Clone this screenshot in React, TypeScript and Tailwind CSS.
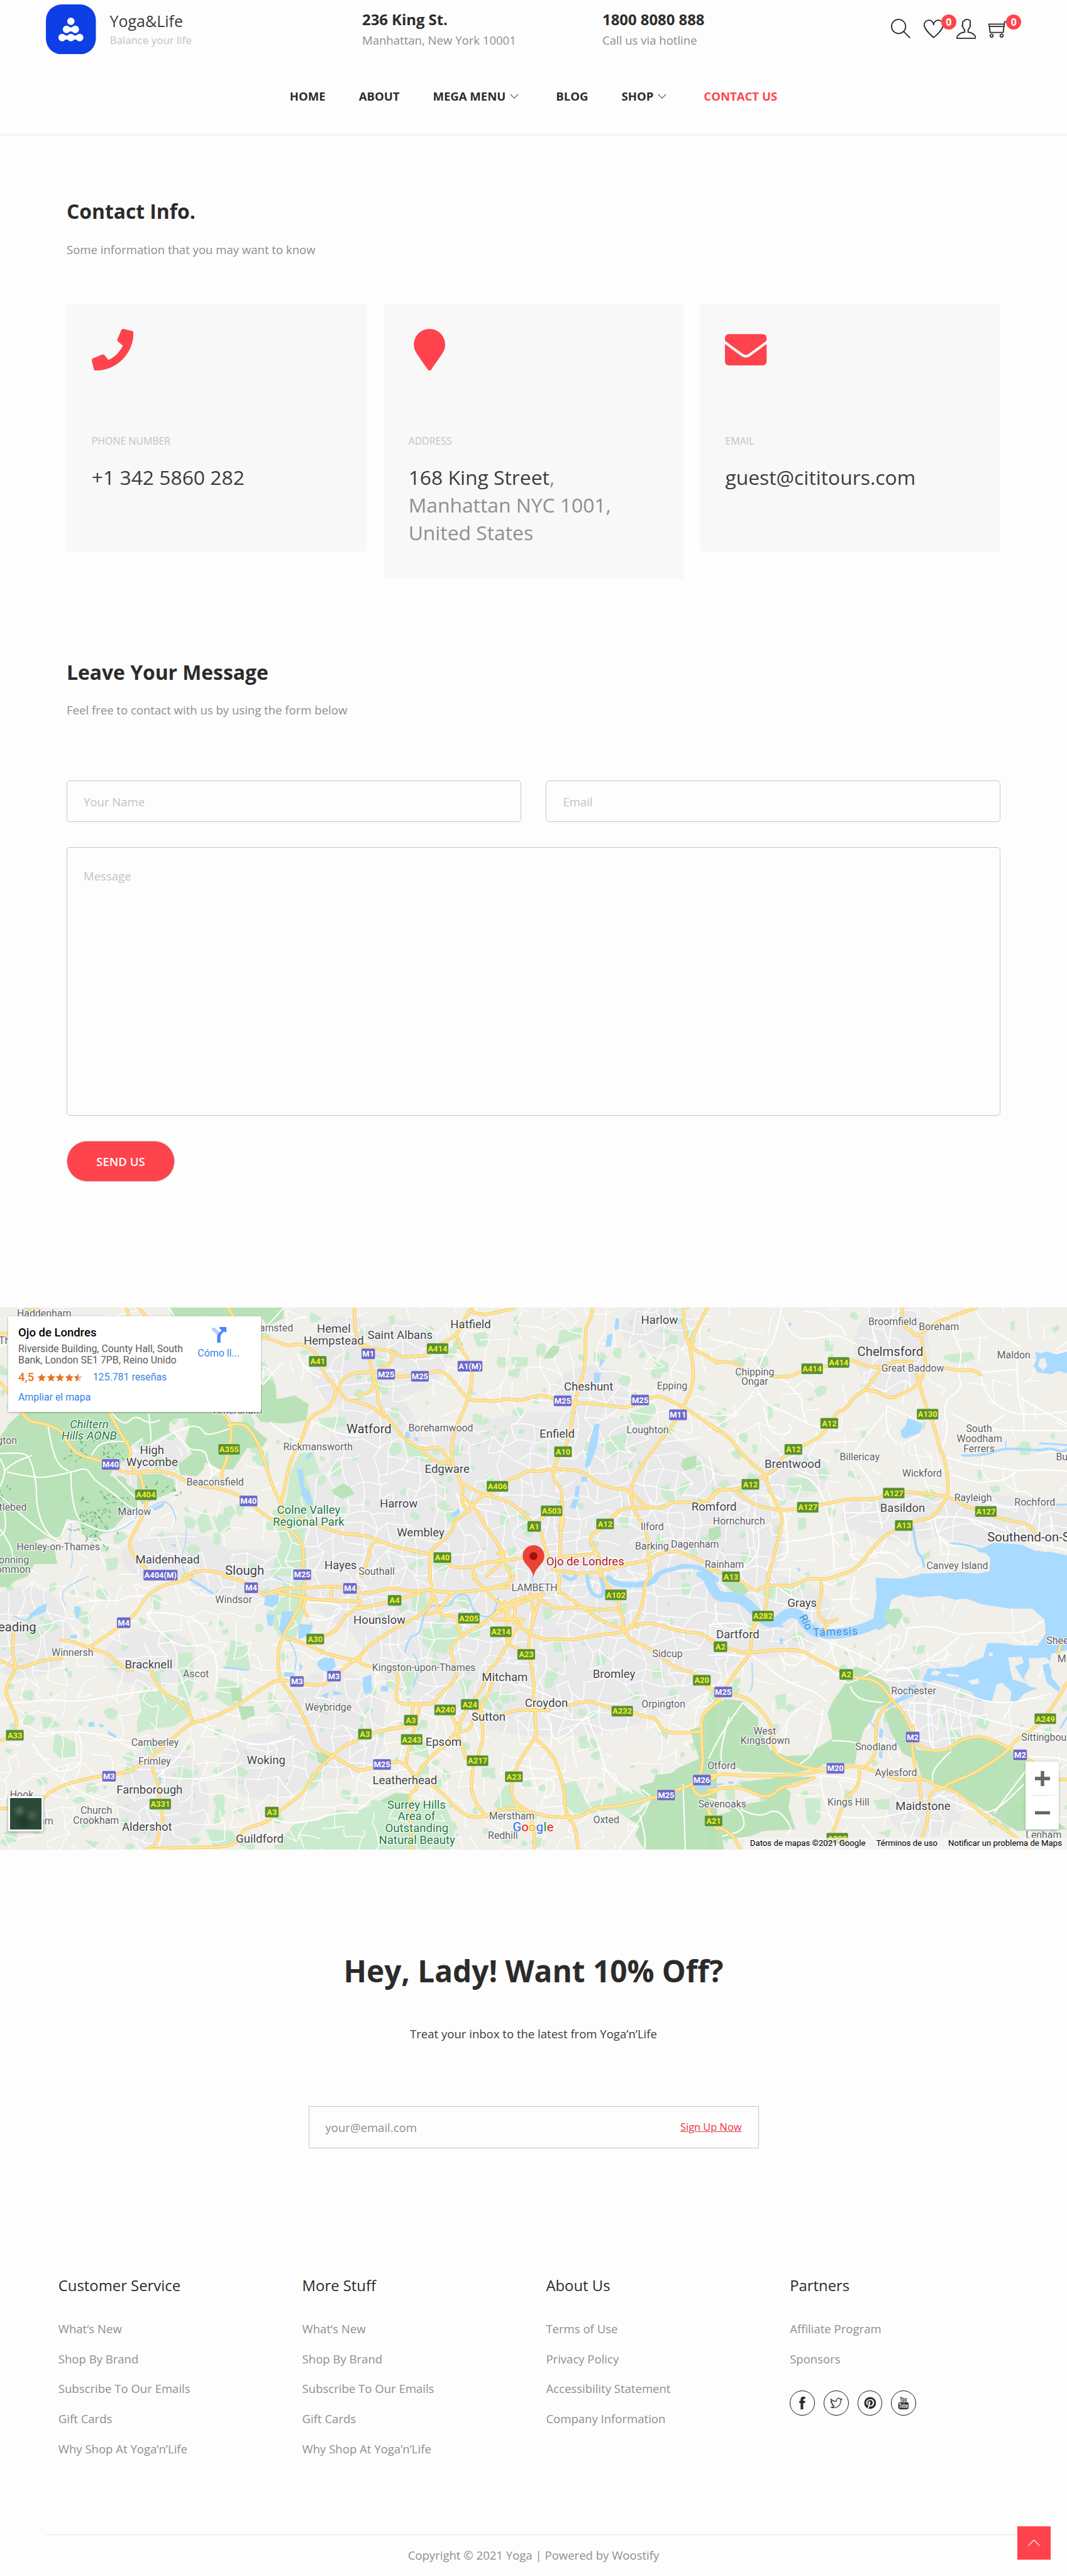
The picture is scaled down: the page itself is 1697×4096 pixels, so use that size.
import React from "react";
import {
  TfiSearch,
  TfiHeart,
  TfiUser,
  TfiShoppingCart,
  TfiAngleDown,
  TfiAngleUp,
  TfiFacebook,
  TfiTwitter,
  TfiPinterestAlt,
  TfiYoutube,
} from "react-icons/tfi";
import { FaPhone, FaMapMarker, FaEnvelope } from "react-icons/fa";

/* ------------------------------------------------------------------ */
/* Map data: six tiles, each in its own grid                           */
/* ------------------------------------------------------------------ */

type Label = [number, number, string, string];
type Shield = [number, number, string];
type Tile = {
  ox: number;
  oy: number;
  sy: number;
  forest: string[];
  park: string[];
  water: string[];
  river: [string, number][];
  white: string[];
  road: string[];
  labels: Label[];
  shields: Shield[];
};

const SX = 0.54847;
const TOP = 0.42091;
const LOW = 0.43367;

const tiles: Tile[] = [
  {
    ox: 0,
    oy: -16,
    sy: TOP,
    forest: [
      "0,780 40,700 90,640 200,600 985,600 1000,690 1080,690 1170,790 1150,830 1080,840 1050,900 1020,960 960,960 900,920 890,960 860,1000 790,990 780,930 840,870 810,800 830,720 820,670 760,670 740,700 740,750 700,780 640,820 620,780 570,830 560,900 500,950 480,1000 540,1000 560,1050 600,1080 620,1160 680,1130 770,1080 760,1020 700,985 600,990 600,1180 540,1230 500,1290 440,1330 430,1355 390,1350 360,1330 350,1270 290,1240 270,1350 240,1370 210,1350 150,1370 240,1420 250,1500 150,1500 120,1570 0,1568",
      "740,30 1240,30 1240,100 1170,145 1140,90 750,90",
      "1090,600 1140,480 1180,450 1205,480 1210,560 1290,540 1350,590 1340,680 1260,700 1140,690",
      "1450,1080 1500,1040 1530,1060 1550,1100 1500,1130 1460,1100",
    ],
    park: [
      "1310,870 1370,860 1400,980 1340,1000 1380,1180 1330,1330 1350,1568 1180,1568 1230,1380 1190,1200 1250,1150 1270,980",
      "860,1250 900,1180 930,1300 880,1330",
      "1390,670 1510,660 1520,710 1420,730",
      "460,1470 520,1460 510,1530 470,1540",
      "930,1230 1000,1200 1010,1300 960,1330",
      "1120,840 1170,860 1180,960 1120,930",
      "1060,600 1100,640 1110,760 1060,700",
    ],
    water: [
      "1300,960 1325,960 1330,1060 1350,1080 1370,1160 1350,1170 1320,1110",
      "1340,880 1365,860 1360,890 1340,910",
      "665,1180 700,1160 720,1145 715,1170 680,1195",
      "745,1385 770,1390 765,1405",
    ],
    river: [
      ["440,1325 520,1310 580,1260 600,1220 640,1190 720,1130 760,1190 770,1250", 2],
      ["300,1260 320,1280 300,1360 320,1450 310,1520", 1.5],
      ["815,1280 815,1380 790,1460 810,1568", 1.5],
    ],
    white: [
      "0,870 80,865 130,880 160,1040 160,1180 200,1320 260,1370 290,1260 340,1250 450,1320 520,1300 590,1240",
      "20,970 50,930 100,900 140,880",
      "0,1060 30,975 0,900",
      "30,975 150,1010 230,1000 330,970 380,950 410,1020 500,1100 560,1170 600,1190",
      "310,970 310,1080 330,1210 350,1250",
      "210,710 220,800 250,930 300,970",
      "490,640 540,720 590,650 650,700 700,680",
      "650,640 660,740 660,800",
      "760,750 830,710 880,720 900,770 980,740 1020,720",
      "760,750 800,800 830,850 900,850 910,930 960,970",
      "760,750 680,810 650,830",
      "560,800 480,800 430,820 400,880",
      "0,1110 60,1180 130,1260 210,1340 260,1370",
      "0,1300 50,1390 60,1490",
      "20,1200 30,1300 0,1340",
      "740,40 760,85",
      "1240,40 1180,130 1160,150 1230,170 1270,110 1340,90",
      "500,1000 560,1080 600,1130",
      "910,930 940,970 900,1050",
      "1400,440 1340,400 1300,300",
      "1150,480 1200,400 1240,350",
      "1340,680 1400,700 1480,760 1568,770",
      "1330,800 1250,770 1180,690",
    ],
    road: [
      "0,465 35,515 90,630 130,690 200,700 270,740 290,800 340,880 430,905 520,960 560,985 680,965 760,985 800,1020 870,1058 960,1065 1080,1125 1140,1210 1230,1270 1310,1350 1330,1430 1320,1568",
      "480,640 540,790 570,830 570,950 600,985",
      "610,985 640,1110 640,1180 600,1290 560,1380 580,1450 640,1530",
      "980,650 1020,690 1000,880 970,970 970,1020",
      "1000,710 1060,690 1110,760 1150,880 1180,1020 1225,1150",
      "1568,570 1510,572 1475,490 1510,430 1568,408",
      "1550,30 1550,180 1580,260",
      "995,30 1020,90",
      "1145,210 1200,220 1250,260 1310,240 1370,280 1390,320 1420,430 1475,490 1460,570 1430,620 1350,660 1320,800 1270,900 1240,1100 1225,1160 1240,1270",
      "550,30 565,90",
      "600,30 640,90",
      "1310,1240 1380,1270 1480,1325 1568,1333",
      "800,1568 860,1540 900,1535 980,1555",
      "0,190 40,185",
      "130,60 165,35",
    ],
    labels: [
      [193, 92, "Haddenham", "s"],
      [1153, 175, "Berkhamsted", "s"],
      [1040, 645, "Amersham", "s"],
      [1460, 180, "Hemel", "m"],
      [1460, 248, "Hempstead", "m"],
      [62, 245, "Thame", "s"],
      [-30, 815, "Watlington", "s"],
      [22, 1195, "Nettlebed", "s"],
      [48, 1495, "Sonning", "s"],
      [44, 1550, "Common", "s"],
      [390, 725, "Chiltern", "gi"],
      [390, 790, "Hills AONB", "gi"],
      [665, 873, "High", "m"],
      [665, 940, "Wycombe", "m"],
      [1391, 852, "Rickmansworth", "s"],
      [941, 1052, "Beaconsfield", "s"],
      [588, 1220, "Marlow", "s"],
      [1350, 1215, "Colne Valley", "g"],
      [1350, 1282, "Regional Park", "g"],
      [255, 1422, "Henley-on-Thames", "s"],
      [733, 1498, "Maidenhead", "m"],
      [1070, 1562, "Slough", "l"],
      [1490, 1530, "Hayes", "m"],
    ],
    shields: [
      [1390, 345, "A41"],
      [1002, 846, "A355"],
      [484, 932, "M40"],
      [638, 1105, "A404"],
      [1087, 1140, "M40"],
      [702, 1563, "A404(M)"],
      [1322, 1560, "M25"],
    ],
  },
  {
    ox: 860,
    oy: -16,
    sy: TOP,
    forest: [
      "820,300 850,255 880,260 875,290 850,325 810,330",
      "1420,900 1480,880 1475,950 1430,970 1410,940",
    ],
    park: [
      "500,190 560,170 570,260 520,260",
      "680,90 700,90 700,200 680,190",
      "880,170 980,150 975,210 870,250",
      "670,320 740,320 740,370 690,380 670,350",
      "650,400 710,380 700,440 660,430",
      "1180,640 1300,580 1300,640 1260,700 1180,710",
      "1090,780 1170,750 1170,850 1110,890 1060,820",
      "200,800 260,830 280,880 340,900 320,930 210,880",
      "420,820 460,830 450,890 410,880",
      "500,640 540,650 545,710 500,690",
      "620,1210 650,1200 660,1270 620,1290",
      "1320,1060 1360,1040 1360,1100 1330,1120",
      "1140,1240 1180,1220 1180,1300 1150,1290",
      "650,1410 690,1400 690,1450 660,1460",
      "1160,920 1200,910 1200,950 1165,960",
      "130,90 160,80 160,130 140,140",
      "1010,1360 1050,1350 1050,1400 1010,1410",
      "90,490 130,480 130,530 95,540",
    ],
    water: [
      "1033,700 1055,700 1045,820 1015,930 1000,955 990,940 1010,810",
      "1090,190 1112,190 1105,260 1080,262",
      "1125,100 1140,100 1138,165 1120,165",
      "1055,330 1080,340 1055,380",
      "1030,410 1062,410 1055,465 1030,468",
      "975,1000 1002,1005 998,1030 975,1030",
      "950,1055 970,1055 962,1120 945,1115",
      "940,1130 965,1130 950,1185 925,1180",
      "205,745 225,750 225,780 205,785",
      "245,775 262,780 260,800 248,800",
      "400,1225 440,1180 445,1210 420,1230",
      "1222,915 1235,920 1230,938",
    ],
    river: [["1300,1568 1330,1540 1380,1530 1420,1508 1490,1518 1530,1545 1568,1590", 7]],
    white: [],
    road: [
      "0,410 80,400 180,435 230,425 320,410 350,395 400,430 480,570 550,565 600,575 650,555 700,570 760,550 800,535 860,560 940,580 1100,595 1150,610 1200,600 1290,545 1330,545 1420,605 1490,660 1568,740",
      "30,250 50,340 65,440 85,500 85,600 150,700 200,790 280,850 350,830 380,870 400,930",
      "280,855 330,920 400,925",
      "0,240 40,270 130,280 200,325 240,315 300,315 340,260 430,200 470,90 500,30",
      "490,60 540,85 600,65 670,50 685,30",
      "430,200 440,260 490,350 500,430 480,570 440,680 410,780 405,900 430,990 460,1060 450,1150 480,1200",
      "155,300 140,360 100,380",
      "0,540 50,530 70,460",
      "0,580 60,600 110,660",
      "1025,30 1020,100 990,150 995,380 960,500 945,600 920,800 870,900 850,960 855,1030 895,1070 885,1280 880,1450",
      "890,1290 900,1250 885,1200",
      "1420,30 1425,180 1450,250 1470,430 1450,530 1420,605 1390,680 1330,780 1260,900 1210,1000 1190,1080",
      "1530,30 1480,150 1450,250 1480,290 1520,310 1568,355",
      "480,1200 530,1110 580,1100 620,1040 700,1000 740,965 790,975 850,955 990,970 1040,1040 1120,1070 1190,1075 1240,1160 1310,1190 1370,1145 1440,1150 1530,1145 1568,1090",
      "455,1040 530,1100 620,1125 690,1170 750,1250 800,1310 810,1380 830,1450",
      "460,1120 520,1190 550,1280 610,1380 630,1450 665,1568",
      "480,1200 420,1250 410,1310 370,1370 310,1420 315,1568",
      "0,1335 50,1340 100,1375 200,1415 330,1445 390,1490 410,1520 500,1520 550,1490 630,1480 720,1465",
      "75,1370 50,1400 45,1460 15,1568",
      "500,1520 510,1568",
      "845,1190 790,1250 770,1290",
      "1260,1180 1200,1175 1130,1195 1080,1290 1000,1340 1050,1440 960,1450 880,1460",
      "1190,1080 1195,1180 1240,1260 1265,1330 1275,1568",
      "1050,1440 1060,1568",
      "850,1530 900,1545 1000,1560 1140,1510 1260,1480 1330,1430 1400,1425 1480,1470 1568,1520",
      "620,1480 650,1420 610,1440",
      "560,1568 620,1500",
    ],
    labels: [
      [491, 158, "Hatfield", "m"],
      [182, 218, "Saint Albans", "m"],
      [1317, 130, "Harlow", "m"],
      [1007, 510, "Cheshunt", "m"],
      [1372, 505, "Epping", "s"],
      [46, 755, "Watford", "l"],
      [360, 743, "Borehamwood", "s"],
      [869, 778, "Enfield", "m"],
      [1265, 755, "Loughton", "s"],
      [388, 980, "Edgware", "m"],
      [176, 1178, "Harrow", "m"],
      [272, 1342, "Wembley", "m"],
      [1285, 1307, "Ilford", "s"],
      [1284, 1418, "Barking", "s"],
      [1472, 1405, "Dagenham", "s"],
      [80, 1560, "Southall", "s"],
      [992, 1508, "Ojo de Londres", "r"],
    ],
    shields: [
      [346, 272, "A414"],
      [43, 302, "M1"],
      [121, 418, "M25"],
      [269, 430, "M25"],
      [488, 373, "A1(M)"],
      [893, 570, "M25"],
      [1232, 565, "M25"],
      [1398, 649, "M11"],
      [895, 860, "A10"],
      [608, 1057, "A406"],
      [845, 1197, "A503"],
      [769, 1285, "A1"],
      [1079, 1271, "A12"],
      [367, 1463, "A40"],
    ],
  },
  {
    ox: 1700,
    oy: -16,
    sy: TOP,
    forest: ["0,1300 50,1280 55,1340 20,1370 0,1350"],
    park: [
      "1030,310 1150,290 1165,330 1110,355 1060,350 1030,330",
      "460,510 490,480 520,490 510,530 480,550",
      "350,1010 430,1010 480,1090 400,1080 380,1100 340,1060",
      "660,480 700,470 690,510",
      "430,560 460,545 450,575",
      "260,590 280,600 280,660 262,680",
      "665,745 690,740 692,790 670,780",
      "610,970 640,970 640,1010 610,1000",
      "1230,1060 1270,1050 1275,1085 1240,1095",
      "590,1330 620,1325 615,1370 590,1365",
      "290,1290 315,1270 310,1340 290,1350",
      "190,820 215,820 210,870 195,870",
      "1320,120 1340,115 1340,170 1322,170",
      "1180,960 1200,970 1190,1030 1175,1000",
      "520,1180 560,1190 550,1230 520,1220",
    ],
    water: [
      "1430,290 1455,300 1480,288 1520,305 1568,290 1568,412 1530,400 1500,418 1440,408 1420,370 1435,340",
      "840,740 862,710 870,670 900,680 935,712 925,750 860,785 845,775",
      "1250,1378 1370,1390 1430,1425 1500,1432 1568,1450 1568,1600 860,1600 930,1555 1010,1552 1100,1545 1180,1555 1230,1540 1232,1465 1215,1440 1170,1425",
      "350,125 362,125 360,145 350,143",
      "385,1520 405,1530 395,1545",
    ],
    river: [
      ["1110,880 1170,882 1230,870 1290,840 1400,848 1450,852 1500,838 1540,862 1568,848", 4],
      ["1450,812 1500,815 1568,822", 3],
      ["1060,1380 1130,1388 1170,1410 1250,1430", 3],
      ["895,1290 905,1390 915,1440 935,1460 942,1515", 4],
      ["1520,1162 1568,1160", 3],
      ["1300,800 1300,840", 2],
    ],
    white: [
      "320,38 290,230 250,280 220,380",
      "250,280 150,270 110,240 40,230 0,205",
      "320,80 360,210 450,220 560,190 650,250",
      "420,60 480,60 520,110 580,140 600,200",
      "210,500 240,590 350,640 430,700 490,720",
      "200,510 130,640 0,740",
      "350,480 410,550 410,620 430,700",
      "355,470 290,430",
      "700,38 730,250",
      "810,38 790,250",
      "1060,150 1080,220 1110,300 1090,400 1110,500 1040,560 1030,640 1050,720 1020,850",
      "1170,60 1200,140 1300,210 1370,270",
      "1190,200 1180,350",
      "1350,330 1350,540 1380,650 1380,740",
      "1190,410 1200,520 1300,640 1440,650 1568,630",
      "1190,410 1350,390",
      "1568,230 1520,280",
      "1060,640 1120,680 1220,740 1568,740",
      "1300,640 1220,720",
      "1350,540 1410,590 1568,700",
      "510,1160 545,1320 550,1530",
      "590,1160 600,1290 630,1380 620,1460 660,1480",
      "300,1380 440,1360 600,1310",
      "1040,890 1130,930 1220,940 1350,970 1440,960 1568,970",
      "900,820 930,960 960,1080 980,1120",
      "780,600 770,740 830,820",
      "780,600 900,670 940,690",
      "850,820 890,790 930,760",
      "770,640 640,840 640,920 700,1000 730,1100 740,1170 760,1300",
      "490,810 640,800",
      "240,770 300,850 320,880",
      "350,700 380,750 270,770 240,600",
      "380,990 430,1000 480,1060 510,1150",
      "330,1190 350,1370 340,1470 300,1480",
      "100,1568 220,1480 220,1300 200,1200",
      "0,880 30,1000 0,1040",
      "600,1205 760,1215 760,1160",
      "1060,1115 1200,1150 1350,1180",
      "1060,990 1180,1040 1220,1030 1300,1020 1350,970",
      "1340,1090 1400,1070 1440,1200 1400,1290",
      "950,1260 1000,1230 1130,1230 1300,1310",
      "990,1250 1000,1350 1060,1400 1040,1500",
      "1130,1230 1220,1330 1400,1330",
      "1300,1270 1310,1350 1568,1420",
      "1450,1200 1440,1400",
      "1500,1230 1500,1400",
      "840,1568 790,1500 720,1490 650,1530",
      "700,1460 770,1400 880,1520",
    ],
    road: [
      "0,320 30,350 90,345 140,370",
      "285,430 350,440 410,395 500,380 570,350 620,330 650,355 740,385 790,360 820,342 890,348",
      "1030,380 1100,400 1150,390 1190,420",
      "848,30 845,150 880,160 905,205 930,180 935,270 955,370 920,480 850,530 790,560 740,515 690,510",
      "940,180 985,130 1060,90 1170,40",
      "750,390 690,510 640,540 600,620 560,630 500,770 420,820 320,890 300,960 200,1030 110,1080 70,1070 30,1085 0,1140",
      "910,420 950,600 990,720 1010,840 1035,900 1050,1060 1040,1130 980,1240 900,1250 790,1320 720,1400 650,1530 560,1568",
      "0,700 90,770 130,850 200,940 250,990 265,1080 310,1180 325,1260 290,1430 260,1580",
      "115,1080 190,1160 260,1180 310,1195 390,1185 520,1155 630,1125 710,1135 770,1110 870,1085 950,1100 1060,1115 1110,1165 1180,1190 1270,1240 1350,1260 1410,1280 1425,1320",
      "0,1530 40,1540 100,1568",
    ],
    labels: [
      [805, 140, "Broomfield", "s"],
      [1008, 167, "Boreham", "s"],
      [795, 315, "Chelmsford", "l"],
      [1335, 330, "Maldon", "s"],
      [893, 402, "Great Baddow", "s"],
      [202, 425, "Chipping", "s"],
      [202, 480, "Ongar", "s"],
      [1183, 748, "South", "s"],
      [1185, 805, "Woodham", "s"],
      [1183, 862, "Ferrers", "s"],
      [661, 910, "Billericay", "s"],
      [368, 953, "Brentwood", "m"],
      [934, 1003, "Wickford", "s"],
      [849, 1203, "Basildon", "m"],
      [1157, 1140, "Rayleigh", "s"],
      [1427, 1167, "Rochford", "s"],
      [1430, 1372, "Southend-on-Sea", "l"],
      [1088, 1527, "Canvey Island", "s"],
      [1608, 908, "Burnham", "s"],
      [24, 1195, "Romford", "m"],
      [133, 1275, "Hornchurch", "s"],
      [69, 1522, "Rainham", "s"],
    ],
    shields: [
      [453, 387, "A414"],
      [569, 351, "A414"],
      [958, 646, "A130"],
      [528, 698, "A12"],
      [371, 846, "A12"],
      [183, 1045, "A12"],
      [434, 1176, "A127"],
      [810, 1095, "A127"],
      [1213, 1200, "A127"],
      [854, 1280, "A13"],
      [98, 1572, "A13"],
    ],
  },
  {
    ox: 0,
    oy: 644,
    sy: LOW,
    forest: ["0,0 120,0 60,30 40,60 0,60", "1040,720 1110,720 1115,770 1060,800", "1380,970 1440,990 1430,1050 1390,1030", "1010,620 1050,620 1060,690 1015,690"],
    park: [
      "610,650 700,630 830,700 835,770 760,830 640,850 600,870 600,800 620,740",
      "1010,350 1080,380 1095,520 980,520 1000,430",
      "960,560 1060,600 1060,700 1000,720 940,670",
      "780,430 840,420 850,560 830,690 780,660",
      "1290,1370 1400,1350 1480,1290 1568,1310 1568,1512 1210,1512 1240,1440",
      "240,870 330,920 330,1000 270,1010 230,970",
      "180,780 220,780 270,830 190,845",
      "780,1060 870,1080 840,1130 780,1120",
      "1240,30 1340,30 1330,200 1290,350 1220,330 1180,240 1230,120",
      "1360,1090 1420,1080 1380,1170 1320,1200",
      "900,1400 1020,1410 1040,1480 930,1490",
      "640,520 700,540 690,600",
      "1060,960 1090,970 1080,1000",
      "370,1460 430,1470 410,1512",
      "160,1120 200,1110 210,1150 170,1160",
      "560,1370 620,1380 620,1420",
    ],
    water: [
      "1160,110 1220,100 1218,150 1190,175 1155,160",
      "1235,195 1285,195 1260,290 1240,330 1220,300",
      "1165,210 1200,215 1190,280 1170,270",
      "1305,265 1372,270 1350,330 1305,350",
      "1390,470 1420,450 1460,455 1470,500 1440,530 1405,520 1388,495",
      "130,210 175,165 205,150 200,200 150,220 120,245",
      "325,165 350,170 345,240 330,230",
      "310,325 340,325 335,345 305,345",
      "385,810 410,805 415,830 390,835",
      "430,815 460,825 440,840",
      "470,850 510,885 505,895 475,875",
      "1245,530 1290,535 1285,560 1240,555",
      "280,510 300,515 290,530",
      "450,1160 468,1165 460,1180",
      "1310,480 1325,500 1310,530",
      "1405,660 1440,640 1430,680",
      "1455,630 1500,650 1460,660",
      "690,1090 708,1110 700,1160",
    ],
    river: [
      ["820,10 870,45 930,95", 4],
      ["1200,0 1240,30", 2],
      ["390,0 280,60 270,130 290,160", 1.5],
      ["60,220 100,250 140,230", 2],
      ["1260,350 1300,420 1290,520", 2],
      ["980,505 1080,520", 3],
    ],
    white: [
      "1345,145 1500,145 1480,220 1400,250 1350,230",
      "170,870 310,860 350,870 360,1000 340,1060 250,1090 180,1000 140,920",
      "310,860 460,870 540,930 600,960",
      "0,710 100,700 240,680 330,700 600,640 690,630",
      "640,200 680,290 760,370 800,390 900,380 940,420 950,520",
      "640,200 820,205 900,290 920,360",
      "340,150 420,130 520,140 560,110 650,110",
      "780,520 830,690",
      "830,900 800,980 690,1110",
      "700,1110 860,1130 960,1100 1060,1030",
      "870,820 1060,930 1200,930 1290,880",
      "240,1090 330,1180 420,1230 500,1260",
      "1568,1310 1480,1300 1300,1380 1150,1330",
    ],
    road: [
      "0,465 50,500 100,510 180,465 270,455",
      "270,355 310,355 390,400 460,420 500,460 550,520 580,518",
      "390,395 500,300 580,230 620,150 650,100 720,45 790,35 840,0",
      "980,0 1080,30 1150,105 1180,95 1230,70 1350,65 1440,55 1568,65",
      "1210,90 1270,105 1360,130 1568,140",
      "1448,65 1448,130",
      "1335,0 1330,110 1280,240 1230,350 1215,430 1220,570 1290,680 1360,860 1380,950 1460,1000 1568,1075",
      "60,310 50,430 75,500 30,600 25,660 75,780 70,870",
      "0,910 30,900",
      "190,1225 240,1170 380,1120 450,1105 560,1085 620,1040 720,940 830,810 910,795 1050,710 1180,590 1240,570 1350,605 1430,600 1500,510 1568,450",
      "660,520 680,600 740,670 820,720 840,800",
      "665,1060 690,1130 700,1260 715,1370",
      "695,1410 690,1480 640,1512",
      "640,1512 760,1500 1000,1500 1040,1460 1070,1390 1160,1370 1230,1290 1330,1200 1380,1080 1450,1000 1500,940 1568,905",
      "1255,345 1340,370 1420,430 1568,470",
      "1340,110 1320,180 1345,220",
      "1420,330 1470,310 1500,230 1568,170",
      "0,1285 40,1285",
    ],
    labels: [
      [58, 305, "Reading", "l"],
      [1022, 150, "Windsor", "s"],
      [317, 440, "Winnersh", "s"],
      [650, 510, "Bracknell", "m"],
      [857, 560, "Ascot", "s"],
      [1436, 745, "Weybridge", "s"],
      [678, 938, "Camberley", "s"],
      [676, 1043, "Frimley", "s"],
      [1164, 1040, "Woking", "m"],
      [654, 1202, "Farnborough", "m"],
      [95, 1228, "Hook", "s"],
      [421, 1315, "Church", "s"],
      [420, 1370, "Crookham", "s"],
      [643, 1410, "Aldershot", "m"],
      [1136, 1475, "Guildford", "m"],
      [157, 1375, "Odiham", "s"],
    ],
    shields: [
      [1099, 65, "M4"],
      [1531, 68, "M4"],
      [541, 258, "M4"],
      [1379, 348, "A30"],
      [1299, 583, "M3"],
      [1461, 553, "M3"],
      [65, 880, "A33"],
      [477, 1107, "M3"],
      [701, 1261, "A331"],
      [1189, 1305, "A3"],
    ],
  },
  {
    ox: 860,
    oy: 644,
    sy: LOW,
    forest: [
      "1568,680 1510,770 1500,830 1450,850 1490,1010 1400,1060 1370,1090 1300,1100 1290,1140 1230,1160 1240,1200 1280,1240 1230,1310 1180,1340 1230,1380 1210,1430 1250,1512 1568,1512",
      "100,1240 160,1200 220,1205 240,1280 160,1290",
    ],
    park: [
      "280,290 400,290 440,250 470,330 400,380 385,430 330,420 280,370",
      "205,500 265,540 265,590 210,620 195,560",
      "0,1300 130,1220 230,1240 380,1260 420,1400 400,1512 0,1512",
      "590,1270 640,1160 670,1150 690,1280 740,1310 620,1300",
      "900,1150 950,1130 1000,1260 1200,1180 1270,1230 1180,1340 1120,1290 980,1320 910,1300",
      "230,120 290,90 310,190 240,200",
      "330,420 360,480 350,520 320,480",
      "480,290 540,270 530,330 490,350",
      "850,370 900,360 900,420 860,420",
      "1040,440 1090,430 1080,490 1040,500",
      "220,930 300,920 310,1010 230,980",
      "1020,180 1060,170 1050,220",
      "960,890 1000,880 1000,960 970,950",
      "440,560 500,580 460,680",
      "540,1060 600,1060 590,1110 540,1110",
      "60,230 110,200 120,240",
      "1280,520 1330,510 1340,560 1290,570",
      "1100,140 1130,150 1140,60",
    ],
    water: ["20,560 58,545 58,640 30,655 18,610", "98,608 130,608 130,638 98,638", "1480,1150 1530,1150 1520,1180 1485,1180", "425,1425 438,1430 432,1440"],
    river: [
      ["205,420 215,340 270,320 280,240 300,170 350,160 400,170 420,110 480,95 500,190 540,225 590,225 612,120", 3],
      ["240,430 270,480 240,620", 2],
      ["1000,0 1008,80 1045,118 1080,100 1060,10", 6],
      ["1095,10 1120,45 1200,50 1280,42 1305,0", 9],
      ["900,0 920,22 945,12 950,0", 6],
      ["760,0 765,50", 2],
      ["1490,-10 1530,20 1545,70 1580,110", 9],
    ],
    white: ["700,590 860,680 940,700", "830,760 960,820 1060,740", "820,760 850,820 840,870 870,920 1000,780", "1000,780 1060,960 1080,1090 1200,1200", "1140,1512 1300,1240 1240,1180", "0,1290 110,1180 200,1160", "700,1130 850,1100 860,1190 820,1230", "1420,1150 1430,1512", "1250,1512 1260,1460 1230,1320"],
    road: [
      "0,95 60,95 150,60 230,90 320,75 400,95 560,75 660,40 680,0",
      "310,0 330,80 310,190 160,290 60,370 10,430 0,480 50,500",
      "0,180 130,145 270,95",
      "0,120 15,180",
      "330,110 350,190 360,220 440,220 430,280 460,330",
      "410,90 350,200 300,210",
      "500,0 560,90 640,170 660,240 740,310 810,355 900,345 940,355 1040,325 1150,315 1210,270 1280,255 1400,305 1500,315 1568,375",
      "810,100 650,130 580,240 460,320 400,390 410,450 440,560 350,660 330,710 250,705 190,710 160,680 175,570 165,530",
      "780,110 690,160 600,210",
      "540,70 660,60",
      "800,100 760,250 740,400 770,580 765,650 770,750 780,870 770,900 720,990 690,1060 670,1140 670,1210 690,1260 740,1290 770,1400 770,1512",
      "750,100 770,210 760,260",
      "640,140 655,260 640,330 670,390 720,410",
      "775,900 850,980 880,1090 900,1180 905,1320 950,1380 960,1512",
      "720,240 690,290 650,380 600,490 570,510 550,610 500,690 450,790 430,860 400,900 370,950 320,990 250,1110",
      "590,240 720,240",
      "690,130 680,240",
      "585,590 570,660 530,720 550,880 525,990 500,1060 490,1180 520,1270 560,1330",
      "430,860 490,860 500,780 530,720",
      "390,740 430,810 430,870 460,960 470,1010",
      "640,760 700,735 790,745 835,740",
      "920,715 990,690 1040,700 1110,735 1200,750 1250,780 1300,780 1330,860 1400,870 1490,860",
      "780,110 840,175 900,180 980,170 1060,190 1140,175 1160,240 1160,310 1200,360 1290,410 1340,465 1390,510 1480,540 1530,620 1568,635",
      "870,80 980,170 1060,250 1160,290",
      "1140,130 1140,175",
      "1275,0 1250,40 1250,130 1210,260 1170,300",
      "1070,0 1090,60 1110,80",
      "880,0 875,90",
      "240,710 230,800",
      "270,710 240,880 210,1000 210,1040",
      "60,870 130,845 210,835 240,820",
      "0,1075 60,1065 150,1025 200,1030 250,1110 260,1180 220,1200 230,1350 230,1512",
      "320,1155 370,1200 430,1290 490,1335 560,1330 640,1280 720,1290 820,1330 900,1335 980,1330 1030,1280 1130,1275 1200,1255 1310,1220 1400,1180 1470,1150 1510,1060 1500,900 1500,760 1580,690",
      "1460,1170 1480,1215 1520,1215 1568,1185",
      "1500,1150 1568,1105",
      "1530,1290 1540,1350 1568,1400",
    ],
    labels: [
      [770, 85, "LAMBETH", "s"],
      [92, 265, "Hounslow", "m"],
      [286, 525, "Kingston-upon-Thames", "s"],
      [640, 580, "Mitcham", "m"],
      [1118, 562, "Bromley", "m"],
      [1352, 450, "Sidcup", "s"],
      [822, 722, "Croydon", "m"],
      [1334, 727, "Orpington", "s"],
      [569, 800, "Sutton", "m"],
      [372, 938, "Epsom", "m"],
      [203, 1152, "Leatherhead", "m"],
      [254, 1287, "Surrey Hills", "g"],
      [254, 1350, "Area of", "g"],
      [255, 1415, "Outstanding", "g"],
      [256, 1480, "Natural Beauty", "g"],
      [671, 1347, "Merstham", "s"],
      [632, 1455, "Redhill", "s"],
      [1084, 1368, "Oxted", "s"],
    ],
    shields: [
      [158, 134, "A4"],
      [1126, 104, "A102"],
      [483, 233, "A205"],
      [623, 308, "A214"],
      [734, 433, "A23"],
      [1502, 576, "A20"],
      [487, 710, "A24"],
      [379, 740, "A240"],
      [1154, 747, "A232"],
      [229, 797, "A3"],
      [28, 874, "A3"],
      [233, 904, "A243"],
      [103, 1042, "M25"],
      [521, 1021, "A217"],
      [680, 1110, "A23"],
      [1502, 1128, "M26"],
      [1346, 1211, "M25"],
    ],
  },
  {
    ox: 1700,
    oy: 644,
    sy: LOW,
    forest: [
      "0,740 70,680 150,690 215,780 220,840 270,960 340,995 430,990 470,970 500,1050 380,1090 150,1080 130,1060 0,1060",
      "520,760 545,690 590,610 640,500 720,530 790,610 800,690 730,740 720,780 680,850 650,960 640,1040 480,1040 450,970 540,900 535,830",
      "770,760 800,725 840,730 880,830 910,960 1010,975 1100,900 1190,885 1320,960 1400,1030 1400,1240 1500,1400 1350,1410 1200,1290 1060,1180 990,1150 930,1110 910,1020 850,980 800,870",
      "1300,1300 1400,1240 1568,1400 1440,1410 1340,1400",
      "140,1140 330,1110 460,1110 330,1160 360,1200 350,1280 380,1400 240,1410 180,1440 60,1460 70,1512 0,1512 0,1340 100,1300 80,1280 260,1240 150,1170",
      "60,40 140,30 175,80 160,105 110,90",
    ],
    park: [
      "420,1230 490,1230 490,1340 460,1380 430,1360",
      "890,390 950,380 940,430 900,430",
      "110,590 140,630 120,660 80,640",
      "720,1240 790,1230 790,1290 740,1290",
      "290,660 340,650 340,730 300,740",
      "560,20 600,20 590,50 560,60",
      "340,80 370,70 370,110",
      "260,820 310,820 300,870",
      "1010,760 1040,780 1030,840",
      "800,430 820,440 800,460",
      "0,650 20,640 30,690 0,700",
      "580,560 640,580 620,620",
      "740,1420 800,1400 790,1445",
    ],
    water: [
      "730,10 850,15 940,-14 1600,-14 1600,480 1510,500 1480,450 1400,455 1405,500 1380,560 1400,610 1440,620 1380,650 1345,700 1320,690 1325,640 1285,590 1260,600 1240,690 1180,690 1150,640 1060,600 990,575 960,590 940,615 935,580 960,510 1000,512 1120,500 1140,480 1200,450 1220,370 1300,372 1340,385 1440,385 1475,320 1470,240 1415,180 1320,180 1190,155 1130,125 1080,130 1010,108 920,118 850,100 800,130 785,200 790,260 760,290 740,300 720,240 735,120",
      "1460,490 1500,480 1500,560 1540,620 1530,640 1480,590",
      "310,345 328,345 325,375 312,375",
      "280,270 330,270 320,285",
      "780,710 850,660 880,600 910,600 900,660 830,700 780,735",
      "750,840 765,850 760,900 745,890",
      "745,950 760,960 760,1010 745,1000",
      "85,1135 110,1135 105,1150 88,1150",
    ],
    river: [
      ["-10,-10 20,80 50,118 120,115 170,150 210,205 260,258 300,255 340,205 395,205 420,260 460,310 540,325 640,305 720,270 760,240", 16],
      ["0,1160 60,1150", 3],
      ["190,480 195,600 180,640", 2],
      ["715,740 700,800 730,840", 2],
      ["1568,780 1540,840", 3],
    ],
    white: [
      "870,290 970,265 1100,330 1180,310 1380,320 1460,250",
      "870,290 860,410 800,400 770,480 750,500",
      "1100,330 1040,400 900,510 760,520",
      "1040,400 1050,460 960,470",
      "480,340 640,420 760,500",
      "400,330 430,420 390,500 330,490 310,430",
      "190,440 250,490 330,580 470,640 520,700",
      "760,500 620,600 590,580",
      "530,360 560,500",
      "600,390 640,500",
      "700,530 770,590 900,570 1000,600 1100,640",
      "900,570 870,490 800,520",
      "620,610 640,680 760,700",
      "870,700 1000,700 1200,790 1400,850 1568,880",
      "900,700 900,850",
      "960,690 960,900 990,960",
      "1030,700 1060,960",
      "1100,640 1210,700 1330,700 1400,680 1500,650",
      "1100,750 1110,890",
      "150,700 60,860 20,960 0,1010",
      "150,700 210,770",
      "90,780 50,950 60,1060",
      "300,990 340,900 340,780 450,690",
      "500,740 480,960 400,1040",
      "540,910 640,910 700,960",
      "1060,970 980,1060 980,1150",
      "490,1110 500,1230 550,1380",
      "480,1105 660,1115 800,1200",
      "570,1330 720,1350 900,1290",
      "670,1370 760,1512",
      "1000,1210 1160,1300 1250,1310 1380,1150",
      "1250,1310 1360,1120 1400,1060",
      "140,1290 220,1340 300,1280 370,1400 340,1430",
      "0,1230 130,1260 170,1400 60,1440",
      "30,150 30,250 60,280",
      "640,0 600,170 700,220",
      "540,130 660,125",
      "270,30 370,130 440,140 480,160",
      "0,270 130,250 200,290",
      "0,440 60,430 180,450",
      "1330,700 1290,790",
      "1400,1000 1520,1000 1568,1020",
    ],
    road: [
      "260,-10 260,160 220,250 185,290 190,420 130,510 70,620 60,660 0,740",
      "110,655 160,665 230,740 280,830 280,960 320,1010 420,1060 520,1070 600,1055 660,1050 730,1080 830,1125 880,1130 940,1115 1000,1165 1080,1185 1190,1310 1350,1445 1400,1512",
      "0,340 20,370",
      "90,400 150,430 300,405 410,410 470,460 580,525 630,560 740,575 800,680 850,750 890,850 915,950 1030,975 1100,905 1200,880 1320,955 1420,1030",
      "890,920 900,1060 925,1150 930,1250",
      "1568,590 1510,720 1430,840 1340,910 1300,980 1150,1100 1060,1140 1030,1170 970,1190 960,1290 960,1350 930,1460",
      "800,690 740,760 730,870 735,980 690,1050",
      "660,1060 665,1160 600,1220 560,1370 535,1440",
      "0,1105 50,1090 160,1105 300,1105 400,1100 520,1070",
      "0,1185 100,1165 160,1175 260,1235 320,1160 380,1160 460,1115",
      "140,30 180,60 210,85 260,45 370,60 430,10 520,20 570,-5",
      "490,20 500,80 480,150 480,220 515,260 560,240",
      "515,260 515,300",
      "1530,430 1540,380",
      "1530,1125 1568,1125",
      "0,1290 10,1320 40,1390 100,1420 140,1512",
      "895,830 895,860",
      "0,620 30,635",
    ],
    labels: [
      [409, 172, "Grays", "m"],
      [128, 345, "Dartford", "m"],
      [897, 655, "Rochester", "s"],
      [246, 875, "West", "s"],
      [248, 930, "Kingsdown", "s"],
      [733, 962, "Snodland", "s"],
      [57, 1067, "Otford", "s"],
      [60, 1278, "Sevenoaks", "s"],
      [820, 1107, "Aylesford", "s"],
      [612, 1270, "Kings Hill", "s"],
      [938, 1292, "Maidstone", "m"],
      [1580, 377, "Sheerness", "s"],
      [1600, 477, "Minster", "s"],
      [1498, 912, "Sittingbourne", "s"],
      [1466, 1450, "Lenham", "s"],
    ],
    shields: [
      [238, 221, "A282"],
      [52, 391, "A2"],
      [602, 544, "A2"],
      [64, 641, "M25"],
      [1473, 789, "A249"],
      [893, 890, "M2"],
      [1363, 989, "M2"],
      [555, 1063, "M20"],
      [22, 1354, "A21"],
      [563, 1450, "A229"],
    ],
  },
];

const islands = ["1310,450 1370,445 1380,480 1340,500 1370,560 1400,600 1330,570 1320,520", "1135,580 1180,565 1185,595 1150,600", "1040,540 1095,545 1095,558 1045,555", "1230,420 1245,430 1240,445 1225,440", "985,520 1020,530 1000,550 970,545"];

/* Seeded generator, so that every render gives the same streets */
function makeRandom(seed: number) {
  let s = seed;
  return () => {
    s = (s * 1664525 + 1013904223) % 4294967296;
    return s / 4294967296;
  };
}

const urbanAreas: [number, number, number, number][] = [
  [1330, 640, 520, 390],
  [1000, 560, 320, 250],
  [1620, 560, 260, 180],
  [960, 120, 110, 90],
  [2140, 100, 90, 110],
  [2170, 500, 150, 60],
  [2400, 510, 190, 60],
  [360, 370, 90, 80],
  [420, 600, 130, 60],
  [590, 640, 140, 60],
  [60, 780, 110, 110],
  [360, 840, 110, 70],
  [390, 1180, 110, 130],
  [640, 1100, 110, 80],
  [1830, 740, 170, 100],
  [2220, 960, 140, 110],
  [2220, 1200, 90, 70],
  [900, 340, 110, 150],
  [1580, 50, 90, 60],
  [1420, 200, 90, 60],
  [1900, 400, 90, 60],
  [800, 1000, 130, 130],
  [830, 130, 90, 110],
];

function inUrban(x: number, y: number) {
  return urbanAreas.some(([cx, cy, rx, ry]) => ((x - cx) / rx) ** 2 + ((y - cy) / ry) ** 2 < 1);
}

function buildStreets() {
  const rnd = makeRandom(77);
  const cell = 34;
  const cols = Math.ceil(2560 / cell) + 2;
  const rows = Math.ceil(1300 / cell) + 2;
  const pts: [number, number][][] = [];
  for (let r = 0; r < rows; r++) {
    pts.push([]);
    for (let c = 0; c < cols; c++) {
      pts[r].push([(c - 0.5 + (rnd() - 0.5) * 0.9) * cell, (r - 0.5 + (rnd() - 0.5) * 0.9) * cell]);
    }
  }
  let d = "";
  const link = (a: [number, number], b: [number, number]) => {
    const keep = inUrban(a[0], a[1]) ? 0.72 : a[0] > 1700 ? 0.16 : a[0] < 900 && a[1] < 640 ? 0.16 : 0.42;
    if (rnd() > keep) return;
    const mx = (a[0] + b[0]) / 2 + (rnd() - 0.5) * 14;
    const my = (a[1] + b[1]) / 2 + (rnd() - 0.5) * 14;
    d += `M${a[0].toFixed(0)} ${a[1].toFixed(0)}Q${mx.toFixed(0)} ${my.toFixed(0)} ${b[0].toFixed(0)} ${b[1].toFixed(0)}`;
  };
  for (let r = 0; r < rows; r++) {
    for (let c = 0; c < cols; c++) {
      if (c + 1 < cols) link(pts[r][c], pts[r][c + 1]);
      if (r + 1 < rows) link(pts[r][c], pts[r + 1][c]);
    }
  }
  return d;
}

function buildPatches() {
  const rnd = makeRandom(4021);
  let d = "";
  for (let i = 0; i < 620; i++) {
    const x = rnd() * 2560;
    const y = rnd() * 1300;
    if (x > 1800 && rnd() > 0.35) continue;
    const n = 6;
    const size = 4 + rnd() * 14;
    for (let k = 0; k < n; k++) {
      const t = (k / n) * Math.PI * 2;
      const rr = size * (0.5 + rnd() * 0.8);
      d += `${k ? "L" : "M"}${(x + Math.cos(t) * rr).toFixed(0)} ${(y + Math.sin(t) * rr).toFixed(0)}`;
    }
    d += "Z";
  }
  return d;
}

function buildTrails() {
  const rnd = makeRandom(91);
  let d = "";
  const zones: [number, number, number, number, number][] = [
    [240, 510, 60, 60, 34],
    [30, 450, 40, 22, 6],
    [200, 340, 35, 20, 7],
    [270, 350, 30, 22, 7],
    [390, 430, 30, 22, 6],
  ];
  for (const [cx, cy, rx, ry, n] of zones) {
    for (let i = 0; i < n; i++) {
      const x = cx + (rnd() * 2 - 1) * rx;
      const y = cy + (rnd() * 2 - 1) * ry;
      d += `M${x.toFixed(0)} ${y.toFixed(0)}l${((rnd() - 0.5) * 34).toFixed(0)} ${((rnd() - 0.5) * 34).toFixed(0)}l${((rnd() - 0.5) * 24).toFixed(0)} ${((rnd() - 0.5) * 24).toFixed(0)}`;
    }
  }
  return d;
}

/* Smooth a list of points into a curve through their midpoints */
function curve(points: string) {
  const p = points.split(" ").map((s) => s.split(",").map(Number));
  let d = `M${p[0][0]} ${p[0][1]}`;
  for (let i = 1; i < p.length - 1; i++) {
    const mx = (p[i][0] + p[i + 1][0]) / 2;
    const my = (p[i][1] + p[i + 1][1]) / 2;
    d += `Q${p[i][0]} ${p[i][1]} ${mx} ${my}`;
  }
  const last = p[p.length - 1];
  return d + `L${last[0]} ${last[1]}`;
}

const streets = buildStreets();
const patches = buildPatches();
const trails = buildTrails();

const labelStyles: Record<string, { size: number; fill: string; italic?: boolean }> = {
  s: { size: 24, fill: "#5f6066" },
  m: { size: 28, fill: "#424347" },
  l: { size: 30.5, fill: "#3c3d41" },
  g: { size: 28, fill: "#1f7a45" },
  gi: { size: 28, fill: "#1f7a45", italic: true },
  r: { size: 28, fill: "#b3161b" },
};

const shieldWidths: Record<number, number> = { 2: 33, 3: 43, 4: 52, 5: 60, 7: 82 };

function TileLayer({ children }: { children: (t: Tile) => React.ReactNode }) {
  return (
    <>
      {tiles.map((t, i) => (
        <g key={i} transform={`translate(${t.ox} ${t.oy}) scale(${SX} ${t.sy})`}>
          {children(t)}
        </g>
      ))}
    </>
  );
}

function MapCanvas() {
  return (
    <svg viewBox="0 0 2560 1300" preserveAspectRatio="none" className="block h-full w-full font-['Roboto',sans-serif]">
      <rect width="2560" height="1300" fill="#f0efe9" />
      <g fill="#e9e9ea">
        {urbanAreas.map(([cx, cy, rx, ry], i) => (
          <ellipse key={i} cx={cx} cy={cy} rx={rx} ry={ry} />
        ))}
      </g>
      <path d={patches} fill="#cbebce" />
      <TileLayer>
        {(t) => (
          <>
            {t.park.map((p, i) => (
              <polygon key={i} points={p} fill="#cbebce" />
            ))}
          </>
        )}
      </TileLayer>
      <path d={streets} fill="none" stroke="#ffffff" strokeWidth="2.4" opacity="0.9" />
      <TileLayer>
        {(t) => (
          <>
            {t.forest.map((p, i) => (
              <polygon key={i} points={p} fill="#b6e1b4" fillOpacity="0.93" />
            ))}
          </>
        )}
      </TileLayer>
      <path d={trails} fill="none" stroke="#5fae7c" strokeWidth="1.8" strokeDasharray="9 6" />
      <TileLayer>
        {(t) => (
          <>
            {t.water.map((p, i) => (
              <polygon key={i} points={p} fill="#a9daff" />
            ))}
            {t.river.map(([p, w], i) => (
              <path key={i} d={curve(p)} fill="none" stroke="#a9daff" strokeWidth={w} strokeLinecap="round" vectorEffect="non-scaling-stroke" />
            ))}
            {t.white.map((p, i) => (
              <path key={i} d={curve(p)} fill="none" stroke="#ffffff" strokeWidth="2.1" vectorEffect="non-scaling-stroke" />
            ))}
          </>
        )}
      </TileLayer>
      <g transform={`translate(1700 644) scale(${SX} ${LOW})`}>
        {islands.map((p) => (
          <polygon key={p} points={p} fill="#f0efe9" />
        ))}
        <polygon points="770,185 835,180 850,215 815,290 770,235" fill="#b9e6c0" />
        <polygon points="1500,430 1600,400 1600,600 1520,560 1490,500" fill="#f0efe9" />
      </g>
      <g transform={`translate(1700 -16) scale(${SX} ${TOP})`}>
        <polygon points="1450,330 1470,325 1482,370 1465,395 1440,370" fill="#f0efe9" />
      </g>
      <TileLayer>
        {(t) => (
          <>
            {t.road.map((p, i) => (
              <path key={i} d={curve(p)} fill="none" stroke="#f8cb72" strokeWidth="5.2" strokeLinecap="round" vectorEffect="non-scaling-stroke" />
            ))}
          </>
        )}
      </TileLayer>
      <TileLayer>
        {(t) => (
          <>
            {t.road.map((p, i) => (
              <path key={i} d={curve(p)} fill="none" stroke="#ffe795" strokeWidth="3.1" strokeLinecap="round" vectorEffect="non-scaling-stroke" />
            ))}
          </>
        )}
      </TileLayer>
      {tiles.map((t, ti) => (
        <g key={ti}>
          {t.shields.map(([x, y, s], i) => {
            const w = shieldWidths[s.length] ?? 52;
            const blue = s[0] === "M" || s.includes("(");
            const cx = t.ox + x * SX;
            const cy = t.oy + y * t.sy;
            return (
              <g key={i}>
                <rect x={cx - w / 2} y={cy - 13} width={w} height="26" rx="3" fill={blue ? "#6b69c9" : "#579034"} stroke="#ffffff" strokeOpacity="0.5" strokeWidth="1" />
                <text x={cx} y={cy + 7} textAnchor="middle" fontSize="19.5" fontWeight="700" fill={blue ? "#ffffff" : "#f5ee27"}>
                  {s}
                </text>
              </g>
            );
          })}
        </g>
      ))}
      {tiles.map((t, ti) => (
        <g key={ti}>
          {t.labels.map(([x, y, s, k], i) => {
            const st = labelStyles[k];
            return (
              <text
                key={i}
                x={t.ox + x * SX}
                y={t.oy + y * t.sy}
                textAnchor="middle"
                fontSize={st.size}
                fill={st.fill}
                fontStyle={st.italic ? "italic" : "normal"}
                stroke="#ffffff"
                strokeOpacity="0.85"
                strokeWidth="4"
                strokeLinejoin="round"
                paintOrder="stroke"
              >
                {s}
              </text>
            );
          })}
        </g>
      ))}
      <g fill="#4a8fdd" fontSize="26">
        <text transform="translate(1917 742) rotate(62)">Río</text>
        <text transform="translate(1951 788) rotate(-2)" letterSpacing="1.5">
          Támesis
        </text>
      </g>
      <text x="1279" y="1256" textAnchor="middle" fontSize="31" fontWeight="500" stroke="#ffffff" strokeWidth="3" paintOrder="stroke">
        <tspan fill="#4285f4">G</tspan>
        <tspan fill="#ea4335">o</tspan>
        <tspan fill="#fbbc05">o</tspan>
        <tspan fill="#4285f4">g</tspan>
        <tspan fill="#34a853">l</tspan>
        <tspan fill="#ea4335">e</tspan>
      </text>
      <path d="M1280 646C1276 622 1254 616 1254 596A26 26 0 0 1 1306 596C1306 616 1284 622 1280 646Z" fill="#ea4335" />
      <circle cx="1280" cy="596" r="9.5" fill="#a50e0e" />
    </svg>
  );
}

function Star({ half }: { half?: boolean }) {
  const d = "M8 0.8L10.1 5.9L15.6 6.3L11.4 9.9L12.7 15.3L8 12.4L3.3 15.3L4.6 9.9L0.4 6.3L5.9 5.9Z";
  return (
    <svg viewBox="0 0 16 16" className="h-[14.5px] w-[14.5px]">
      <path d={d} fill={half ? "#c9c9c9" : "#e7711b"} />
      {half && <path d="M8 0.8V12.4L3.3 15.3L4.6 9.9L0.4 6.3L5.9 5.9Z" fill="#e7711b" />}
    </svg>
  );
}

function PlaceCard() {
  return (
    <div className="absolute top-[14px] left-[13px] flex h-[152px] w-[402px] justify-between bg-white pt-[15px] pr-[34px] pl-[16px] font-['Roboto',sans-serif] text-[15.9px] leading-[18.6px] shadow-[0_1px_3px_rgba(0,0,0,0.3)]">
      <div className="whitespace-nowrap">
        <div className="text-[18.5px] leading-[22px] font-medium text-black">Ojo de Londres</div>
        <div className="mt-[6px] text-[#5b5b5b]">
          Riverside Building, County Hall, South
          <br />
          Bank, London SE1 7PB, Reino Unido
        </div>
        <div className="mt-[6px] flex h-[23px] items-center">
          <span className="text-[18.5px] font-medium text-[#e7711b]">4,5</span>
          <span className="ml-[5px] flex">
            <Star />
            <Star />
            <Star />
            <Star />
            <Star half />
          </span>
          <span className="ml-[16px] text-[#3a84df]">125.781 reseñas</span>
        </div>
        <div className="mt-[11px] text-[#3a84df]">Ampliar el mapa</div>
      </div>
      <div className="flex flex-col items-center pt-[2px] text-[#3a84df]">
        <svg viewBox="0 0 36 48" preserveAspectRatio="none" className="h-[25px] w-[24px]">
          <path d="M18 28L2 10L1 2L9 3L22 18Z" fill="#bccbfb" />
          <path d="M14 48V30C14 22 18 18 25 11L20 5L19 0H36V17L30 14C25 20 22 24 22 30V48Z" fill="#4a86f7" />
        </svg>
        <div className="mt-[8px]">Cómo ll...</div>
      </div>
    </div>
  );
}

function MapSection() {
  return (
    <section className="relative h-[862px] w-full overflow-hidden">
      <MapCanvas />
      <PlaceCard />
      <div className="absolute top-[777px] left-[13px] h-[56px] w-[56px] rounded-[2px] border-[3px] border-white bg-[#2c4a38] bg-[radial-gradient(circle_at_30%_40%,#5a6f62_0,transparent_22%),radial-gradient(circle_at_70%_55%,#4c6055_0,transparent_25%),radial-gradient(circle_at_45%_75%,#1d3a2a_0,transparent_35%)] shadow-[0_1px_4px_rgba(0,0,0,0.4)]" />
      <div className="absolute top-[722px] right-[13px] flex h-[108px] w-[53px] flex-col items-center rounded-[2px] bg-white shadow-[0_1px_4px_rgba(0,0,0,0.25)]">
        <svg viewBox="0 0 24 24" className="mt-[15px] h-[24px] w-[24px]">
          <path d="M9.3 0H14.7V9.3H24V14.7H14.7V24H9.3V14.7H0V9.3H9.3Z" fill="#666" />
        </svg>
        <div className="mt-[14px] h-px w-[38px] bg-[#e2e2e2]" />
        <div className="mt-[25px] h-[5.3px] w-[24px] bg-[#666]" />
      </div>
      <div className="absolute right-0 bottom-0 flex h-[19px] items-center gap-[17px] bg-[#f5f5f5]/75 pr-[8px] pl-[10px] font-['Roboto',sans-serif] text-[13.2px] whitespace-nowrap text-black">
        <span>Datos de mapas ©2021 Google</span>
        <span>Términos de uso</span>
        <span>Notificar un problema de Maps</span>
      </div>
    </section>
  );
}

/* ------------------------------------------------------------------ */
/* Page                                                                */
/* ------------------------------------------------------------------ */

function Logo() {
  return (
    <svg viewBox="0 0 120 120" className="h-[79.5px] w-[79.5px]">
      <rect width="120" height="120" rx="38" fill="#0e3fe6" />
      <g fill="#fff">
        <circle cx="60" cy="40.5" r="8.8" />
        <circle cx="49.5" cy="60" r="9" />
        <circle cx="70.5" cy="60" r="9" />
        <rect x="49" y="55" width="22" height="10" />
        <circle cx="39" cy="79.5" r="9" />
        <circle cx="60" cy="79.5" r="9" />
        <circle cx="81" cy="79.5" r="9" />
        <rect x="39" y="74.5" width="42" height="10" />
      </g>
    </svg>
  );
}

function Badge() {
  return (
    <span className="absolute top-[-7px] left-[28px] flex h-[24px] w-[24px] items-center justify-center rounded-full bg-[#ff434c] text-[16px] leading-none font-bold text-white">
      0
    </span>
  );
}

function Header() {
  const nav = [
    { t: "HOME" },
    { t: "ABOUT" },
    { t: "MEGA MENU", drop: true },
    { t: "BLOG" },
    { t: "SHOP", drop: true },
    { t: "CONTACT US", active: true },
  ];
  return (
    <header className="h-[215px] border-b-[1.5px] border-[#e6e6e6]">
      <div className="flex h-[140px] px-[73px]">
        <div className="flex w-[503px] pt-[6.6px]">
          <Logo />
          <div className="pt-[11.5px] pl-[22px]">
            <div className="text-[25px] leading-[30px] text-[#3c3c3c]">Yoga&amp;Life</div>
            <div className="mt-[4px] text-[16.9px] leading-[24px] text-[#c2c2c2]">Balance your life</div>
          </div>
        </div>
        <div className="w-[382px] pt-[15.8px]">
          <div className="text-[23.86px] leading-[30px] font-bold text-[#2b2b2b]">236 King St.</div>
          <div className="mt-[5.6px] text-[18.56px] leading-[26px] text-[#8f8f8f]">Manhattan, New York 10001</div>
        </div>
        <div className="pt-[15.8px]">
          <div className="text-[23.86px] leading-[30px] font-bold text-[#2b2b2b]">1800 8080 888</div>
          <div className="mt-[5.6px] text-[18.56px] leading-[26px] text-[#8f8f8f]">Call us via hotline</div>
        </div>
        <div className="mr-[20px] ml-auto flex gap-[19.9px] pt-[29.8px] text-[31.8px] text-[#2b2b2b]">
          <TfiSearch />
          <div className="relative h-[32px]">
            <TfiHeart />
            <Badge />
          </div>
          <TfiUser />
          <div className="relative h-[32px]">
            <TfiShoppingCart />
            <Badge />
          </div>
        </div>
      </div>
      <nav className="flex justify-center gap-[53px] text-[18.56px] leading-[26px] font-bold text-[#2b2b2b]">
        {nav.map((n) => (
          <a key={n.t} className={n.active ? "text-[#ff434c]" : "flex items-center"}>
            {n.t}
            {n.drop && <TfiAngleDown className="mr-[6px] ml-[7px] h-[14px] w-[14px]" />}
          </a>
        ))}
      </nav>
    </header>
  );
}

function InfoCard({ icon, label, tall, children }: { icon: React.ReactNode; label: string; tall?: boolean; children: React.ReactNode }) {
  return (
    <div className={tall ? "h-[436.8px] flex-1 bg-[#f8f8f8] px-[39.8px] pt-[39.8px]" : "h-[394.4px] flex-1 bg-[#f8f8f8] px-[39.8px] pt-[39.8px]"}>
      <div className="flex h-[66.3px] w-[66.3px] items-center justify-center text-[66.3px] text-[#ff434c]">{icon}</div>
      <div className="mt-[100.9px] text-[15.9px] leading-[22px] text-[#c2c2c2]">{label}</div>
      <div className="mt-[24.8px] text-[31.82px] leading-[44px] whitespace-nowrap text-[#3c3c3c]">{children}</div>
    </div>
  );
}

function ContactInfo() {
  return (
    <section className="px-[106px] pt-[99px]">
      <h2 className="text-[31.82px] leading-[44px] font-bold text-[#2b2b2b]">Contact Info.</h2>
      <p className="mt-[26px] text-[18.56px] leading-[26px] text-[#8f8f8f]">Some information that you may want to know</p>
      <div className="mt-[72.8px] flex items-start gap-[26.5px]">
        <InfoCard icon={<FaPhone />} label="PHONE NUMBER">
          +1 342 5860 282
        </InfoCard>
        <InfoCard icon={<FaMapMarker />} label="ADDRESS" tall>
          168 King Street<span className="text-[#8f8f8f]">,</span>
          <div className="text-[#8f8f8f]">
            Manhattan NYC 1001,
            <br />
            United States
          </div>
        </InfoCard>
        <InfoCard icon={<FaEnvelope />} label="EMAIL">
          guest@cititours.com
        </InfoCard>
      </div>
    </section>
  );
}

function MessageForm() {
  return (
    <section className="h-[1159.2px] px-[106px] pt-[127.5px] text-[18.56px]">
      <h2 className="text-[31.82px] leading-[44px] font-bold text-[#2b2b2b]">Leave Your Message</h2>
      <p className="mt-[24.8px] leading-[26px] text-[#8f8f8f]">Feel free to contact with us by using the form below</p>
      <div className="mt-[98.7px] flex gap-[39.8px] text-[#c2c2c2]">
        <div className="flex h-[66.3px] flex-1 items-center rounded-[5px] border-[1.3px] border-[#c6c6c6] px-[26px] pt-[2px]">Your Name</div>
        <div className="flex h-[66.3px] flex-1 items-center rounded-[5px] border-[1.3px] border-[#c6c6c6] px-[26px] pt-[2px]">Email</div>
      </div>
      <div className="mt-[39.8px] h-[427px] rounded-[5px] border-[1.3px] border-[#c6c6c6] px-[26px] pt-[32px] leading-[26px] text-[#c2c2c2]">Message</div>
      <button className="mt-[40.5px] flex h-[65.3px] w-[172px] items-center justify-center rounded-full border border-[#cfc3c4] bg-[#ff434c] font-semibold text-white">SEND US</button>
    </section>
  );
}

function Newsletter() {
  return (
    <section className="flex h-[677.2px] flex-col items-center pt-[160.5px]">
      <h2 className="text-[47.73px] leading-[66px] font-bold text-[#2b2b2b]">Hey, Lady! Want 10% Off?</h2>
      <p className="mt-[54px] text-[18.56px] leading-[26px] text-[#3c3c3c]">Treat your inbox to the latest from Yoga&rsquo;n&rsquo;Life</p>
      <div className="mt-[102px] flex h-[66.3px] w-[716px] items-center justify-between border-[1.3px] border-[#c6c6c6] px-[26px] text-[18.56px] text-[#8f8f8f]">
        <span>your@email.com</span>
        <span className="text-[16.4px] text-[#e8333d] underline">Sign Up Now</span>
      </div>
    </section>
  );
}

function Footer() {
  const service = ["What\u2018s New", "Shop By Brand", "Subscribe To Our Emails", "Gift Cards", "Why Shop At Yoga\u2019n\u2019Life"];
  const cols = [
    { h: "Customer Service", links: service },
    { h: "More Stuff", links: service },
    { h: "About Us", links: ["Terms of Use", "Privacy Policy", "Accessibility Statement", "Company Information"] },
    { h: "Partners", links: ["Affiliate Program", "Sponsors"], social: true },
  ];
  return (
    <footer>
      <div className="grid h-[411.7px] grid-cols-[repeat(4,387.8px)] pl-[92.8px]">
        {cols.map((c) => (
          <div key={c.h}>
            <h3 className="text-[23.86px] leading-[32px] text-[#2b2b2b]">{c.h}</h3>
            <ul className="mt-[28.8px] text-[18.56px] leading-[47.73px] text-[#8f8f8f]">
              {c.links.map((l) => (
                <li key={l}>{l}</li>
              ))}
            </ul>
            {c.social && (
              <div className="mt-[26.7px] flex gap-[13.9px] text-[19.9px] text-[#2b2b2b]">
                {[TfiFacebook, TfiTwitter, TfiPinterestAlt, TfiYoutube].map((Icon, i) => (
                  <span key={i} className="flex h-[39.8px] w-[39.8px] items-center justify-center rounded-full border-[1.3px] border-[#1a1a1a]">
                    <Icon />
                  </span>
                ))}
              </div>
            )}
          </div>
        ))}
      </div>
      <div className="mx-[73px] border-t-[1.3px] border-[#e6e6e6] pt-[19px] text-center text-[18.56px] leading-[26px] text-[#8f8f8f]">Copyright © 2021 Yoga | Powered by Woostify</div>
    </footer>
  );
}

export default function App() {
  return (
    <div className="relative h-[4096px] w-[1697px] overflow-hidden bg-[#fdfdfd] font-['Open_Sans',sans-serif]">
      <Header />
      <ContactInfo />
      <MessageForm />
      <MapSection />
      <Newsletter />
      <Footer />
      <div className="absolute right-[26.5px] bottom-[26.5px] flex h-[53px] w-[53px] items-center justify-center bg-[#ff434c] text-[21px] text-white">
        <TfiAngleUp />
      </div>
    </div>
  );
}
